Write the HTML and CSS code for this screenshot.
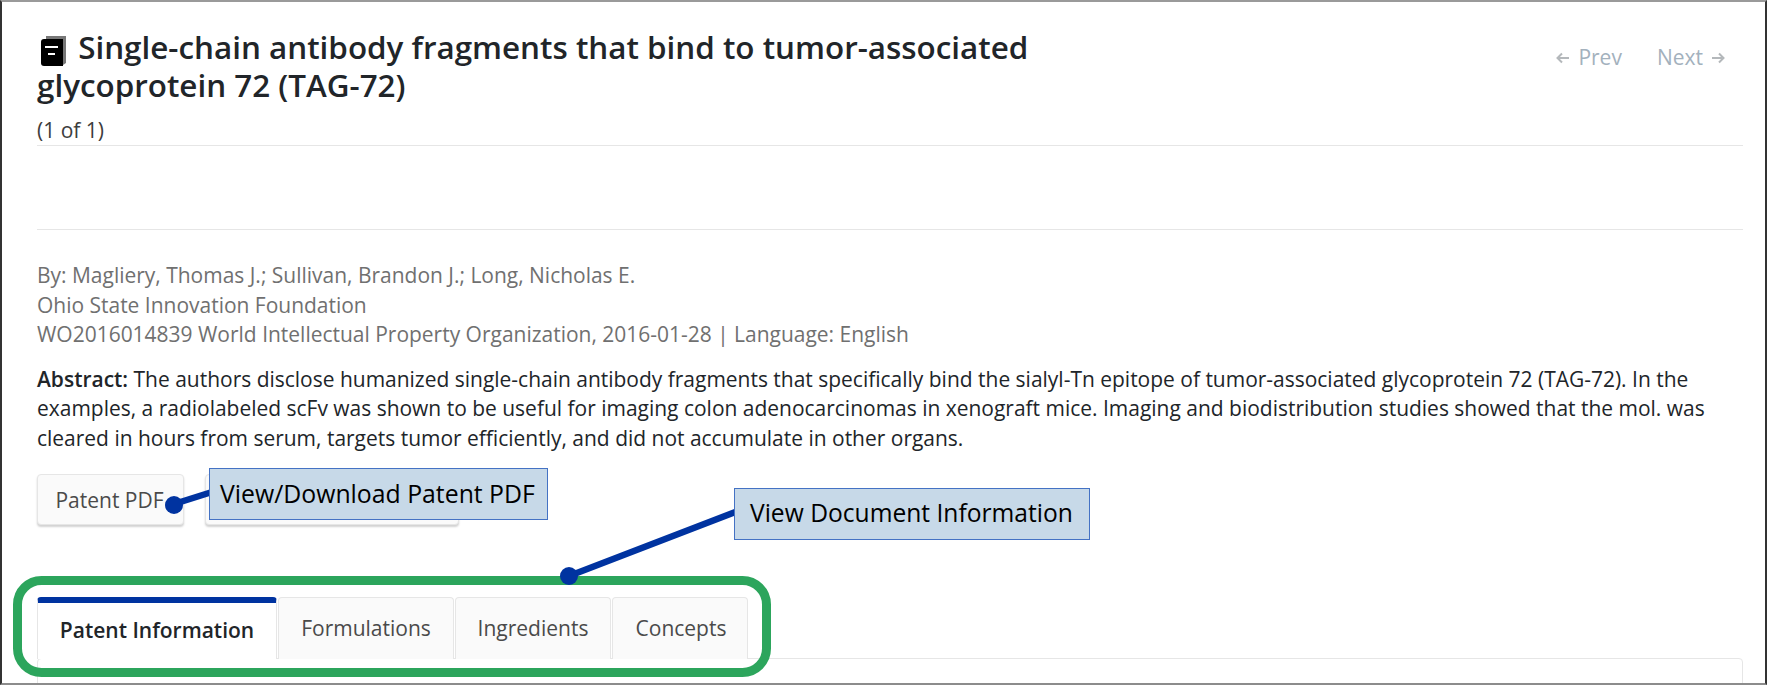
FILE: index.html
```html
<!DOCTYPE html>
<html lang="en">
<head>
<meta charset="utf-8">
<title>Patent record</title>
<link rel="stylesheet" href="styles.css">
</head>
<body>
<div class="frame">
  <header class="head">
    <div class="head-text">
      <h1 class="title"><svg class="book" viewBox="0 0 25 30" aria-hidden="true"><path d="M5 0H25V27L22 29V3H5Z" fill="#777"/><path d="M3 3H22V30H3C1 30 0 29 0 27V6C0 4 1 3 3 3Z" fill="#000"/><path d="M4 10H17V12H4ZM7 17H14V19H7Z" fill="#fff"/></svg> Single-chain antibody fragments that bind to tumor-associated glycoprotein 72 (TAG-72)</h1>
      <div class="count">(1 of 1)</div>
    </div>
    <nav class="pager">
      <span class="pager-item"><svg class="arrow" viewBox="0 0 14 12" aria-hidden="true"><path d="M13 6H2M6 1.5L1.5 6L6 10.5" fill="none" stroke="#b4b8bb" stroke-width="2"/></svg>Prev</span>
      <span class="pager-item">Next<svg class="arrow" viewBox="0 0 14 12" aria-hidden="true"><path d="M1 6H12M8 1.5L12.5 6L8 10.5" fill="none" stroke="#b4b8bb" stroke-width="2"/></svg></span>
    </nav>
  </header>
  <div class="spacer"></div>
  <div class="meta">
    <div>By: Magliery, Thomas J.; Sullivan, Brandon J.; Long, Nicholas E.</div>
    <div>Ohio State Innovation Foundation</div>
    <div>WO2016014839 World Intellectual Property Organization, 2016-01-28 | Language: English</div>
  </div>
  <p class="abstract"><b>Abstract:</b> The authors disclose humanized single-chain antibody fragments that specifically bind the sialyl-Tn epitope of tumor-associated glycoprotein 72 (TAG-72). In the examples, a radiolabeled scFv was shown to be useful for imaging colon adenocarcinomas in xenograft mice. Imaging and biodistribution studies showed that the mol. was cleared in hours from serum, targets tumor efficiently, and did not accumulate in other organs.</p>
  <div class="buttons">
    <button class="btn">Patent PDF</button>
    <button class="btn btn-wide"></button>
  </div>
  <div class="tabs">
    <div class="tab tab-active">Patent Information</div>
    <div class="tab tab-form">Formulations</div>
    <div class="tab tab-ingr">Ingredients</div>
    <div class="tab tab-conc">Concepts</div>
  </div>
  <div class="panel"></div>

  <svg class="lines" viewBox="0 0 1767 685" aria-hidden="true">
    <rect x="17.5" y="580.5" width="749" height="92" rx="24" fill="none" stroke="#2ca55c" stroke-width="9"/>
    <path d="M174 504L212 492M569 576L738 511" stroke="#0033a0" stroke-width="6.5" fill="none"/>
    <circle cx="174" cy="505" r="9" fill="#0033a0"/>
    <circle cx="569" cy="576" r="9" fill="#0033a0"/>
  </svg>
  <div class="callout callout-pdf">View/Download Patent PDF</div>
  <div class="callout callout-doc">View Document Information</div>
</div>
</body>
</html>
```
FILE: styles.css
```css
* { box-sizing: border-box; }
html, body { margin: 0; padding: 0; background: #fff; }
body { width: 1767px; height: 685px; overflow: hidden; font-family: "Open Sans", sans-serif; color: #212529; }
.frame {
  position: relative;
  width: 1767px;
  height: 685px;
  overflow: hidden;
  border-top: 2px solid #9a9a9a;
  border-bottom: 2px solid #8c8c8c;
  border-left: 2px solid #333;
  border-right: 2px solid #333;
  padding: 26px 22px 0 35px;
}
.head { display: flex; justify-content: space-between; align-items: flex-start; border-bottom: 1px solid #e6e6e6; height: 118px; }
.head-text { width: 1010px; }
.title { margin: 0; font-size: 31.4px; line-height: 38px; font-weight: 600; color: #212529; }
.book { width: 25px; height: 30px; vertical-align: -7px; margin: 0 4px 0 4px; }
.count { font-size: 21px; line-height: 29px; margin-top: 12px; color: #3d3d3d; }
.pager { display: flex; gap: 35px; padding: 15px 18px 0 0; font-size: 21px; line-height: 29px; color: #a3b1bd; }
.pager-item { display: flex; align-items: center; gap: 8px; }
.arrow { width: 14px; height: 12px; }
.spacer { height: 84px; border-bottom: 1px solid #e6e6e6; }
.meta { margin-top: 31px; font-size: 20.97px; line-height: 29.5px; color: #707070; }
.abstract { margin: 15px 0 0; font-size: 20.97px; line-height: 29.5px; color: #212529; }
.abstract b { font-weight: 600; }
.buttons { display: flex; gap: 21px; margin-top: 21px; }
.btn {
  width: 147px;
  height: 51px;
  border: 1px solid #e6e6e6;
  border-radius: 4px;
  background: #fafafa;
  box-shadow: 0 2px 2px rgba(0, 0, 0, .18);
  font: 21px "Open Sans", sans-serif;
  color: #4a4a4a;
  padding: 0 2px 0 0;
}
.btn-wide { width: 254px; }
.tabs { display: flex; gap: 1px; margin-top: 72px; height: 62px; }
.tab {
  display: flex;
  align-items: center;
  justify-content: center;
  border: 1px solid #e6e6e6;
  border-bottom: 0;
  border-radius: 4px 4px 0 0;
  background: #fafafa;
  font-size: 21px;
  color: #4a4a4a;
  padding-bottom: 2px;
}
.tab-active { width: 240px; background: #fff; border-top: 6px solid #0033a0; font-weight: 600; color: #212529; }
.tab-form { width: 176px; }
.tab-ingr { width: 156px; }
.tab-conc { width: 136px; padding-left: 2px; }
.panel { height: 40px; border: 1px solid #e6e6e6; border-radius: 4px 4px 0 0; margin-top: -1px; width: 1706px; }
.lines { position: absolute; left: -2px; top: -2px; width: 1767px; height: 685px; }
.callout {
  position: absolute;
  height: 52px;
  display: flex;
  align-items: center;
  padding-bottom: 3px;
  background: #c7d9e8;
  border: 1px solid #4472c4;
  color: #000;
  white-space: nowrap;
}
.callout-pdf { left: 207px; top: 466px; width: 339px; padding-left: 10px; font-size: 24.8px; }
.callout-doc { left: 732px; top: 486px; width: 356px; padding-left: 15px; font-size: 24.6px; }
```
